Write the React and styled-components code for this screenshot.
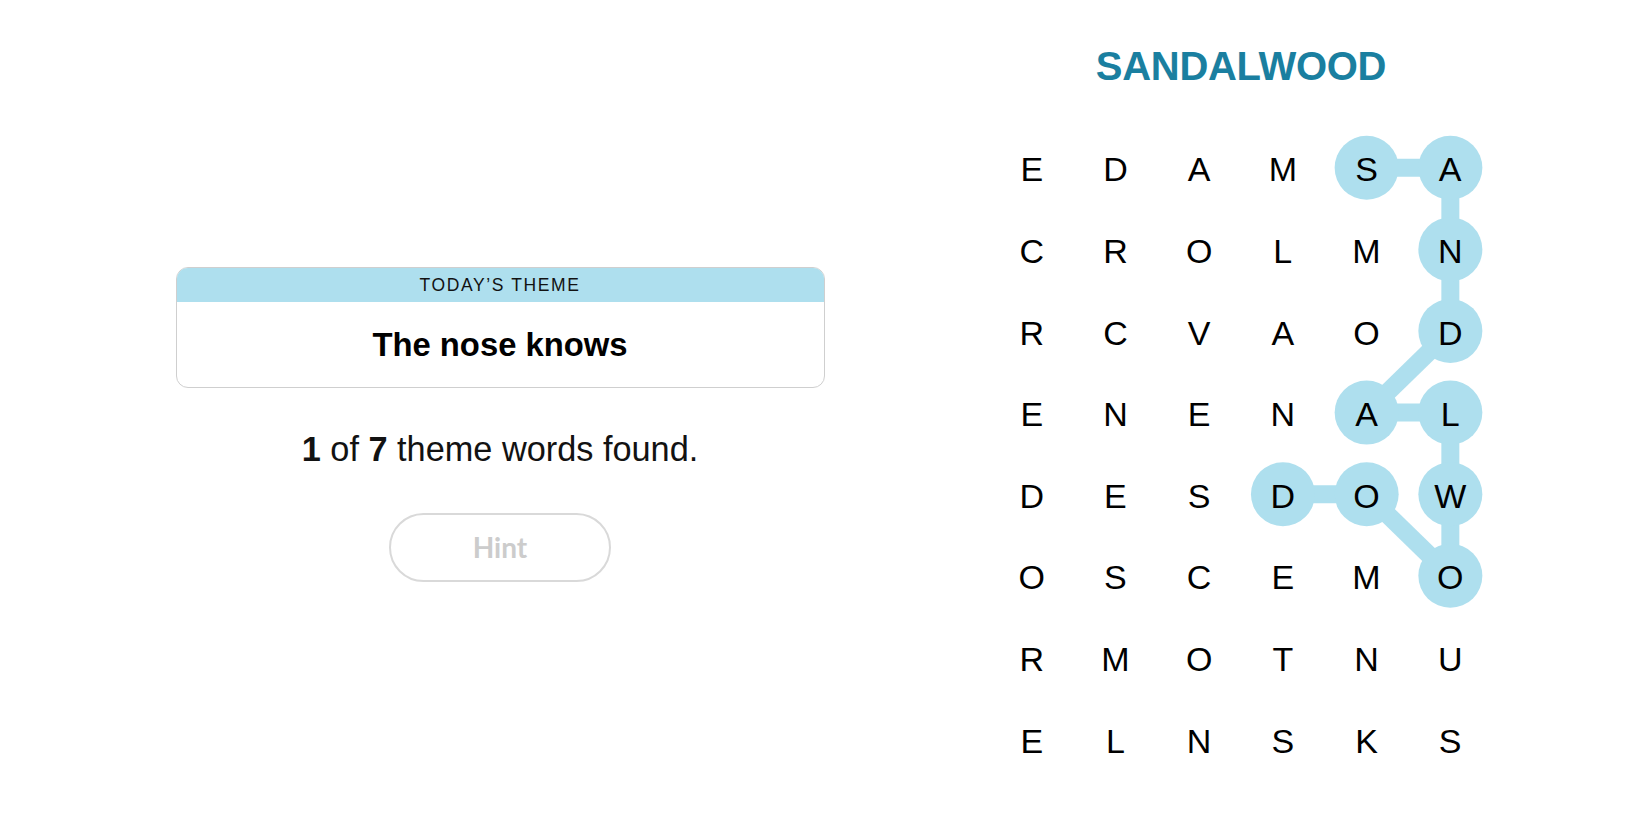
import React from "react";
import styled, { createGlobalStyle } from "styled-components";

const Global = createGlobalStyle`
  html, body { margin: 0; padding: 0; background: #fff; }
  body { font-family: "Liberation Sans", Arial, sans-serif; color: #121212; }
`;

const Page = styled.div`
  display: flex;
  flex-direction: row;
  width: 1650px;
  height: 825px;
  overflow: hidden;
`;

const LeftCol = styled.div`
  box-sizing: border-box;
  width: 990px;
  padding: 267px 0 0 10px;
  display: flex;
  flex-direction: column;
  align-items: center;
`;

const ThemeCard = styled.div`
  box-sizing: border-box;
  width: 649px;
  height: 121px;
  border: 1px solid #cfcfcf;
  border-radius: 12px;
  overflow: hidden;
  display: flex;
  flex-direction: column;
`;

const ThemeBand = styled.div`
  height: 34px;
  background: #aedfee;
  display: flex;
  align-items: center;
  justify-content: center;
  font-size: 17.5px;
  letter-spacing: 1.6px;
  color: #121212;
  padding-top: 1px;
  box-sizing: border-box;
`;

const ThemeBody = styled.div`
  flex: 1;
  display: flex;
  align-items: center;
  justify-content: center;
  font-size: 32.8px;
  font-weight: 700;
  color: #000;
`;

const Progress = styled.div`
  margin-top: 41px;
  font-size: 34.3px;
  line-height: 40px;
  color: #121212;
  b { font-weight: 700; }
`;

const HintButton = styled.button`
  margin-top: 44px;
  box-sizing: border-box;
  width: 222px;
  height: 69px;
  border: 2px solid #d9d9d9;
  border-radius: 35px;
  background: #fff;
  font-family: Lato, "Liberation Sans", sans-serif;
  font-weight: 700;
  font-size: 28px;
  color: #cccccc;
  padding: 0 0 2px 0;
`;

const RightCol = styled.div`
  display: flex;
  flex-direction: column;
  align-items: center;
  padding-top: 42px;
  width: 502px;
`;

const Title = styled.div`
  font-size: 40px;
  line-height: 48px;
  font-weight: 700;
  letter-spacing: -0.3px;
  color: #1a7fa0;
`;

const Board = styled.div`
  position: relative;
  margin-top: 38.6px;
  width: ${(p) => p.$cw * 6}px;
  height: ${(p) => p.$ch * 8}px;
`;

const Overlay = styled.svg`
  position: absolute;
  left: 0;
  top: 0;
  pointer-events: none;
`;

const LetterGrid = styled.div`
  position: relative;
  display: grid;
  grid-template-columns: repeat(6, ${(p) => p.$cw}px);
  grid-template-rows: repeat(8, ${(p) => p.$ch}px);
`;

const Cell = styled.div`
  display: flex;
  align-items: center;
  justify-content: center;
  font-size: 34px;
  line-height: 1;
  color: #000;
`;

const rows = [
  "EDAMSA",
  "CROLMN",
  "RCVAOD",
  "ENENAL",
  "DESDOW",
  "OSCEMO",
  "RMOTNU",
  "ELNSKS",
];

const path = [
  [0, 4],
  [0, 5],
  [1, 5],
  [2, 5],
  [3, 4],
  [3, 5],
  [4, 5],
  [5, 5],
  [4, 4],
  [4, 3],
];

const CW = 83.7;
const CH = 81.6;

export default function App() {
  const cx = (c) => c * CW + CW / 2;
  const cy = (r) => r * CH + CH / 2 - 2;
  return (
    <>
      <Global />
      <Page>
        <LeftCol>
          <ThemeCard>
            <ThemeBand>TODAY’S THEME</ThemeBand>
            <ThemeBody>The nose knows</ThemeBody>
          </ThemeCard>
          <Progress>
            <b>1</b> of <b>7</b> theme words found.
          </Progress>
          <HintButton disabled>Hint</HintButton>
        </LeftCol>
        <RightCol>
          <Title>SANDALWOOD</Title>
          <Board $cw={CW} $ch={CH}>
            <Overlay width={CW * 6} height={CH * 8}>
              {path.slice(1).map(([r, c], i) => {
                const [pr, pc] = path[i];
                return (
                  <line
                    key={i}
                    x1={cx(pc)}
                    y1={cy(pr)}
                    x2={cx(c)}
                    y2={cy(r)}
                    stroke="#aedfee"
                    strokeWidth="18"
                  />
                );
              })}
              {path.map(([r, c], i) => (
                <circle key={i} cx={cx(c)} cy={cy(r)} r="32" fill="#aedfee" />
              ))}
            </Overlay>
            <LetterGrid $cw={CW} $ch={CH}>
              {rows.map((row, r) =>
                row.split("").map((ch, c) => <Cell key={`${r}-${c}`}>{ch}</Cell>)
              )}
            </LetterGrid>
          </Board>
        </RightCol>
      </Page>
    </>
  );
}
